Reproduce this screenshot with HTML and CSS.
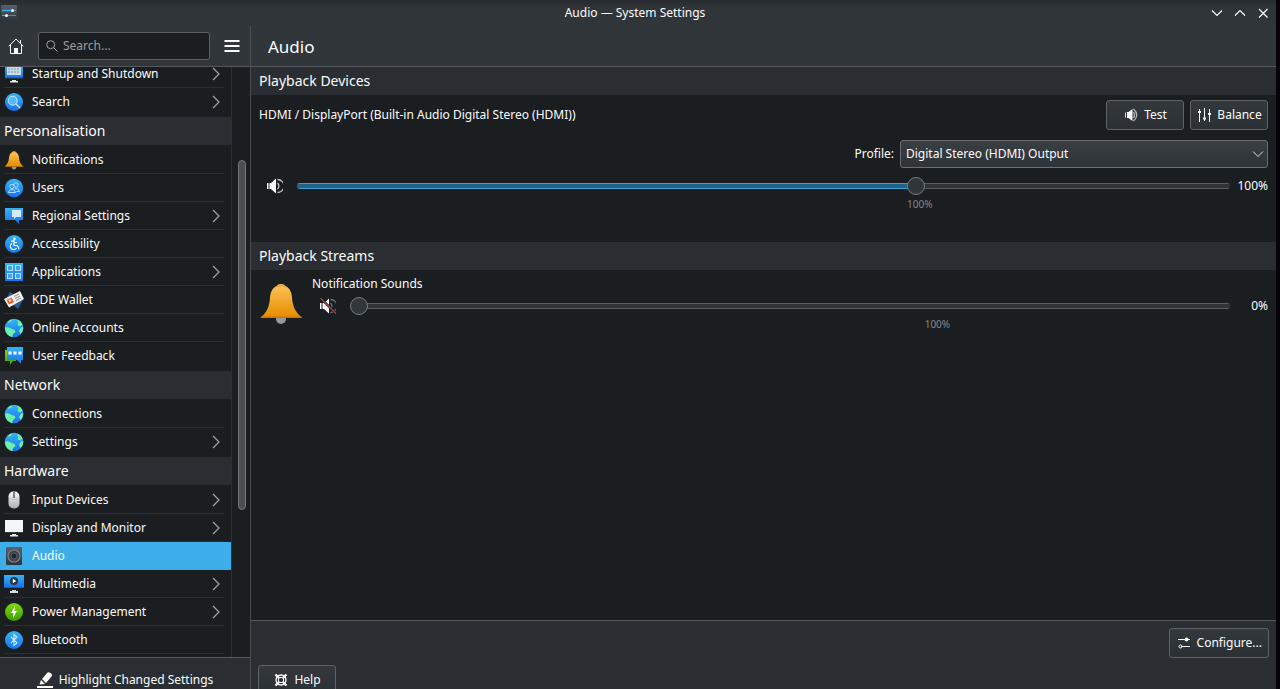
FILE: index.html
```html
<!DOCTYPE html>
<html lang="en-GB">
<head>
    <meta charset="UTF-8">
    <meta name="viewport" content="width=device-width, initial-scale=1.0">
    <title>Audio — System Settings</title>
    <link rel="stylesheet" href="styles.css">
</head>
<body>
    <!-- shared icons -->
    <svg class="defs" width="0" height="0" aria-hidden="true">
        <defs>
            <linearGradient id="blue" x1="0" y1="0" x2="0" y2="1"><stop offset="0" stop-color="#35b4f5"/><stop offset="1" stop-color="#1a73ec"/></linearGradient>
            <linearGradient id="green" x1="0" y1="0" x2="0" y2="1"><stop offset="0" stop-color="#7bdc08"/><stop offset="1" stop-color="#3f9c0a"/></linearGradient>
            <linearGradient id="gold" x1="0" y1="0" x2="0" y2="1"><stop offset="0" stop-color="#fdc55b"/><stop offset="1" stop-color="#e58c00"/></linearGradient>
            <linearGradient id="silver" x1="0" y1="0" x2="0" y2="1"><stop offset="0" stop-color="#fafafa"/><stop offset="1" stop-color="#a9adb2"/></linearGradient>
            <linearGradient id="slate" x1="0" y1="0" x2="0" y2="1"><stop offset="0" stop-color="#56616b"/><stop offset="1" stop-color="#2c343c"/></linearGradient>
        </defs>
        <symbol id="chevron" viewBox="0 0 8 14"><path d="M1 1l6 6-6 6" fill="none" stroke="#a3a6a8" stroke-width="1.2"/></symbol>
        <symbol id="bell" viewBox="0 0 44 44">
            <path d="M17 37h10v1a5 5 0 0 1-10 0z" fill="#95999d"/>
            <path d="M17.500 5a4.800 3.200 0 0 1 9 0q6 3 6.500 11c.5 10 3.500 14.500 9.500 20.500H2c6-6 8.500-10.500 9-20.500q.5-8 6.500-11z" fill="url(#gold)"/>
            <path d="M2 35.500h40.500l.5 1.500H1.500z" fill="#c97a00"/>
            <path d="M16.500 6q5.500-3 11 0" fill="none" stroke="#e59a20"/>
        </symbol>
        <symbol id="globe" viewBox="0 0 20 20">
            <circle cx="10" cy="10" r="9.300" fill="url(#blue)"/>
            <path d="M1 9.500c2.500-.8 5 0 6.500 1.500l3 .8 1 2.200-2.500 2-.6 3C4.500 18.500 1 15 1 9.500zM13 1.500c2.500.8 4.500 2.500 5.500 5l-2.500 2-2.500-1.500.7-2zM17 9.500l2.200-.5c.2 3-.8 5.200-2.700 7l-1.500-3zM5 2.500l3-1-.5 2L4 5z" fill="#6ff0a8"/>
        </symbol>
        <symbol id="speaker" viewBox="0 0 16 16">
            <path d="M0 5h1.500v6H0zM2.500 5H4l5-4.500v15L4 11H2.500z" fill="#fcfcfc"/>
            <path d="M10.500 5a4 4 0 0 1 0 6M10.500 1.500a6.500 6.500 0 0 1 0 13" fill="none" stroke="#c4c6c8" stroke-width="1.300"/>
        </symbol>
    </svg>

    <div class="window">
        <header class="titlebar">
            <svg class="app-icon" viewBox="0 0 18 18">
                <rect x="1" y="1" width="16" height="16" rx="1" fill="url(#slate)"/>
                <path d="M2 6.500h9" stroke="#3daee9" stroke-width="1.500"/><path d="M11 6.500h5M7 11.500h9" stroke="#798087"/><path d="M2 11.500h4" stroke="#3daee9"/>
                <circle cx="12.500" cy="6.500" r="1.500" fill="#fff"/><circle cx="6.500" cy="11.500" r="1.500" fill="#fff"/>
            </svg>
            <span class="window-title">Audio — System Settings</span>
            <div class="window-buttons">
                <button type="button" aria-label="Minimise"><svg viewBox="0 0 12 12"><path d="M1 3.500l5 5 5-5"/></svg></button>
                <button type="button" aria-label="Maximise"><svg viewBox="0 0 12 12"><path d="M1 8.500l5-5 5 5"/></svg></button>
                <button type="button" aria-label="Close"><svg viewBox="0 0 12 12"><path d="M2 2l8.500 8.500M10.500 2L2 10.500"/></svg></button>
            </div>
        </header>

        <div class="columns">
            <aside class="sidebar">
                <div class="toolbar">
                    <button type="button" class="tool" aria-label="Home">
                        <svg viewBox="0 0 16 16"><path d="M.7 8.300L8 1l7.300 7.300M2.500 7v8.500h11V7M12.500 2v3" fill="none" stroke="#fcfcfc"/><path d="M6 15.500V10h4v5.500z" fill="#fcfcfc"/></svg>
                    </button>
                    <label class="search">
                        <svg viewBox="0 0 12 12"><circle cx="4.700" cy="4.700" r="4"/><path d="M7.600 7.600l4 4"/></svg>
                        <input type="text" placeholder="Search..." aria-label="Search">
                    </label>
                    <button type="button" class="tool" aria-label="Menu">
                        <svg viewBox="0 0 16 16"><path d="M.5 3h15M.5 8h15M.5 13h15" stroke="#fcfcfc" stroke-width="2"/></svg>
                    </button>
                </div>

                <div class="nav-area">
                    <nav class="nav">
                        <ul>
                            <li><a href="#"><svg class="icon" viewBox="0 0 20 20"><rect x="1" y="1" width="18" height="13" fill="url(#blue)"/><path d="M3 3h14v8H3z" fill="#c8dce8"/><path d="M4 5h12M4 8h12" stroke="#7d97aa" stroke-dasharray="2 1"/><path d="M1 14h18" stroke="#2a4a66"/><path d="M8 16h4v1h2v1.500H6V17h2z" fill="#e8e8e8"/></svg>Startup and Shutdown<svg class="chevron"><use href="#chevron"/></svg></a></li>
                            <li><a href="#"><svg class="icon" viewBox="0 0 20 20"><circle cx="10" cy="10" r="9" fill="url(#blue)"/><circle cx="8.700" cy="8.700" r="4.500" fill="#55b8f8" stroke="#cfeaff"/><path d="M12 12l4 4" stroke="#cfeaff" stroke-width="1.200"/></svg>Search<svg class="chevron"><use href="#chevron"/></svg></a></li>
                        </ul>
                        <h2>Personalisation</h2>
                        <ul>
                            <li><a href="#"><svg class="icon"><use href="#bell"/></svg>Notifications</a></li>
                            <li><a href="#"><svg class="icon" viewBox="0 0 20 20"><circle cx="10" cy="10" r="9.200" fill="url(#blue)"/><g fill="none" stroke="#a9dcff"><circle cx="8" cy="8.500" r="2.200"/><circle cx="12" cy="7" r="2.200"/><path d="M4.500 14.500q0-3 3.500-3t3.500 3zM11 10.500q4-.5 4.500 3h-3"/></g></svg>Users</a></li>
                            <li><a href="#"><svg class="icon" viewBox="0 0 20 20"><path d="M1 2h18v12h-4v4l-4-4H1z" fill="url(#blue)"/><path d="M8 4h9v7h-5l-2 2v-2H8z" fill="#d5ebfa"/></svg>Regional Settings<svg class="chevron"><use href="#chevron"/></svg></a></li>
                            <li><a href="#"><svg class="icon" viewBox="0 0 20 20"><circle cx="10" cy="10" r="9" fill="url(#blue)"/><circle cx="10.500" cy="4.800" r="1.300" fill="#fff"/><path d="M7 7.500l3-1v5h3.500l1.500 3.500M10 8.500h3M8 9.500a3.300 3.300 0 1 0 4.500 4.500" fill="none" stroke="#fff" stroke-width="1.200"/></svg>Accessibility</a></li>
                            <li><a href="#"><svg class="icon" viewBox="0 0 20 20"><rect x="1" y="1" width="18" height="18" fill="url(#blue)"/><g fill="#39a5ee" stroke="#b3e0ff"><rect x="3.500" y="3.500" width="5" height="5"/><rect x="11.500" y="3.500" width="5" height="5"/><rect x="3.500" y="11.500" width="5" height="5"/><rect x="11.500" y="11.500" width="5" height="5"/></g></svg>Applications<svg class="chevron"><use href="#chevron"/></svg></a></li>
                            <li><a href="#"><svg class="icon" viewBox="0 0 20 20"><path d="M2 9l4-7 13 8-5 9z" fill="#285e96"/><path d="M0 9L16 1l4 8L5 17.500z" fill="#f4f0ea"/><path d="M2.500 10l5-2.500 2.500 4.500-5 2.500z" fill="#e2632c"/><path d="M10 6.500l5-2.500M11 8.500l5-2.500M12 10.500l5-2.500" stroke="#8a8a8a"/><circle cx="6" cy="10.500" r="1.200" fill="#f8ddc8"/></svg>KDE Wallet</a></li>
                            <li><a href="#"><svg class="icon"><use href="#globe"/></svg>Online Accounts</a></li>
                            <li><a href="#"><svg class="icon" viewBox="0 0 20 20"><path d="M1 4h11v11H9l-3 4v-4H1z" fill="url(#green)"/><path d="M3 1h16v13h-2v4l-4-4H3z" fill="url(#blue)"/><path d="M6 5v4M4.200 6l3.600 2M7.800 6L4.200 8M11 5v4M9.200 6l3.600 2M12.800 6L9.200 8M16 5v4M14.200 6l3.600 2M17.800 6l-3.600 2" stroke="#fff"/></svg>User Feedback</a></li>
                        </ul>
                        <h2>Network</h2>
                        <ul>
                            <li><a href="#"><svg class="icon"><use href="#globe"/></svg>Connections</a></li>
                            <li><a href="#"><svg class="icon"><use href="#globe"/></svg>Settings<svg class="chevron"><use href="#chevron"/></svg></a></li>
                        </ul>
                        <h2>Hardware</h2>
                        <ul>
                            <li><a href="#"><svg class="icon" viewBox="0 0 20 20"><rect x="4.500" y="1.500" width="11" height="17" rx="5" fill="url(#silver)"/><path d="M10 2v6" stroke="#5c6166" stroke-width="1.600"/><path d="M5 8.500q5 2 10 0" fill="none" stroke="#c0c3c6"/></svg>Input Devices<svg class="chevron"><use href="#chevron"/></svg></a></li>
                            <li><a href="#"><svg class="icon" viewBox="0 0 20 20"><rect x="1" y="2" width="18" height="12.500" fill="#f3f7fa"/><path d="M1 14.500h18" stroke="#34393e"/><path d="M8 16h4v1h2v1.500H6V17h2z" fill="#e8e8e8"/></svg>Display and Monitor<svg class="chevron"><use href="#chevron"/></svg></a></li>
                            <li class="current"><a href="#" aria-current="page"><svg class="icon" viewBox="0 0 20 20"><rect x="2" y="1" width="16" height="18" rx="1" fill="url(#slate)"/><circle cx="10" cy="10" r="6" fill="#3a434b" stroke="#77818b" stroke-width="1.200"/><circle cx="10" cy="10" r="3" fill="#20262b" stroke="#56606a"/></svg>Audio</a></li>
                            <li><a href="#"><svg class="icon" viewBox="0 0 20 20"><rect x="0" y="1" width="20" height="12" fill="url(#blue)"/><path d="M0 13.500h20" stroke="#2b5f80"/><path d="M8 16h4v1h2v2H6v-2h2z" fill="#d8dadc"/><circle cx="10" cy="7" r="4" fill="#29333b"/><path d="M8.800 4.800l3.500 2.200-3.500 2.200z" fill="#fff"/></svg>Multimedia<svg class="chevron"><use href="#chevron"/></svg></a></li>
                            <li><a href="#"><svg class="icon" viewBox="0 0 20 20"><circle cx="10" cy="10" r="9" fill="url(#green)"/><path d="M11 4l-4 7h2.500L9 16l4-7h-2.500z" fill="#fff"/></svg>Power Management<svg class="chevron"><use href="#chevron"/></svg></a></li>
                            <li><a href="#"><svg class="icon" viewBox="0 0 20 20"><circle cx="10" cy="10" r="9" fill="url(#blue)"/><path d="M7 7l6 6-3 2.500v-11L13 7l-6 6" fill="none" stroke="#cfe9ff" stroke-width="1.100"/></svg>Bluetooth</a></li>
                        </ul>
                    </nav>
                    <div class="scrollbar"><div class="scroll-thumb"></div></div>
                </div>

                <div class="sidebar-footer">
                    <button type="button" class="flat">
                        <svg viewBox="0 0 16 16"><path d="M0 14h16v2H0zM2.500 12.500L4 8l4 4zM5 7l5.500-6.500q1-.8 3 .5t1.500 3L9 11z" fill="#fcfcfc"/></svg>
                        Highlight Changed Settings
                    </button>
                </div>
            </aside>

            <main class="page">
                <h1>Audio</h1>
                <div class="content">
                    <section class="devices">
                        <h2>Playback Devices</h2>
                        <div class="device">
                            <div class="device-head">
                                <span class="device-name">HDMI / DisplayPort (Built-in Audio Digital Stereo (HDMI))</span>
                                <button type="button" class="btn wide"><svg viewBox="0 0 16 16"><path d="M2.500 5.500v5" stroke="#d8dadb"/><path d="M4 5h1.500L9.500 2v12l-4-3H4z" fill="#fcfcfc"/><path d="M10.500 5q2 3 0 6M10.500 2q6.500 6 0 12" fill="none" stroke="#b5b8ba" stroke-width="1.300"/></svg>Test</button>
                                <button type="button" class="btn wide"><svg viewBox="0 0 16 16"><path d="M3.500 2v13M8.500 1v13M13.500 2v13" stroke="#fcfcfc"/><path d="M2 4h3v2H2zM7 10.500h3v2H7zM12 6h3v2h-3z" fill="#fcfcfc"/></svg>Balance</button>
                            </div>
                            <div class="profile">
                                <label for="profile">Profile:</label>
                                <div class="select">
                                    <select id="profile"><option>Digital Stereo (HDMI) Output</option></select>
                                    <svg viewBox="0 0 12 12"><path d="M1 3.500l5 5 5-5"/></svg>
                                </div>
                            </div>
                            <div class="volume">
                                <button type="button" class="mute" aria-label="Mute"><svg><use href="#speaker"/></svg></button>
                                <input type="range" min="0" max="150" value="100" aria-label="Volume" style="--fill: 66.7%">
                                <output>100%</output>
                                <div class="tick"><span>100%</span></div>
                            </div>
                        </div>
                    </section>
                    <section class="streams">
                        <h2>Playback Streams</h2>
                        <div class="stream">
                            <svg class="stream-icon"><use href="#bell"/></svg>
                            <div class="stream-body">
                                <div class="stream-name">Notification Sounds</div>
                                <div class="volume">
                                    <button type="button" class="mute" aria-label="Unmute"><svg viewBox="0 0 16 16"><path d="M0 5h1.500v6H0zM2.500 5H4l5-4.500v15L4 11H2.500z" fill="#fcfcfc"/><path d="M10.500 5a4 4 0 0 1 0 6M10.500 1.500a6.500 6.500 0 0 1 0 13" fill="none" stroke="#6a6d6f" stroke-width="1.300"/><path d="M.5 0L16 15.500" stroke="#1b1e20" stroke-width="2.400"/><path d="M.5 0L16 15.500" stroke="#b34450" stroke-width="1.200"/></svg></button>
                                    <input type="range" min="0" max="150" value="0" aria-label="Notification volume" style="--fill: 0%">
                                    <output>0%</output>
                                    <div class="tick"><span>100%</span></div>
                                </div>
                            </div>
                        </div>
                    </section>
                </div>
                <footer class="page-footer">
                    <div class="configure">
                        <button type="button" class="btn"><svg viewBox="0 0 16 16"><path d="M2 4.500h12M5 11.500h9" stroke="#fcfcfc" stroke-width="1.200"/><circle cx="10.500" cy="4.500" r="2" fill="#fcfcfc"/><circle cx="4.500" cy="11.500" r="1.500" fill="none" stroke="#fcfcfc"/></svg>Configure...</button>
                    </div>
                    <button type="button" class="btn wide"><svg viewBox="0 0 16 16"><circle cx="8" cy="8" r="5" fill="none" stroke="#fcfcfc" stroke-width="1.300"/><circle cx="8" cy="8" r="2.700" fill="none" stroke="#fcfcfc"/><path d="M2.500 2.500l3.500 3.500M13.500 2.500L10 6M2.500 13.500L6 10M13.500 13.500L10 10" stroke="#fcfcfc" stroke-width="2.400"/></svg>Help</button>
                </footer>
            </main>
        </div>
    </div>
</body>
</html>
```

FILE: styles.css
```css
* { box-sizing: border-box; }
body {
    margin: 0; padding-right: 4px; overflow: hidden; background: #06030a;
    font-family: "Noto Sans", "Open Sans", sans-serif; font-size: 12px; line-height: 18px; color: #fcfcfc;
}
button, input, select { font: inherit; color: inherit; }
button { padding: 0; border: none; background: none; }
h1, h2 { margin: 0; font-weight: normal; }
svg { flex: none; }
.defs { position: absolute; }

/* the window reaches a little below the screen edge */
.window { display: flex; flex-direction: column; height: calc(100vh + 13px); background: #2a2e32; }
.titlebar {
    display: grid; grid-template-columns: 1fr auto 1fr; align-items: center; height: 26px; padding: 0 6px 0 0;
    background: linear-gradient(#272b2f, #30353a 8px);
}
.app-icon { width: 18px; height: 18px; }
.window-buttons { display: flex; justify-content: flex-end; gap: 9px; }
.window-buttons button { width: 14px; height: 14px; display: flex; align-items: center; justify-content: center; }
.window-buttons svg { width: 12px; height: 12px; fill: none; stroke: #fcfcfc; stroke-width: 1.2; }
.columns { flex: 1; display: flex; min-height: 0; }

/* sidebar */
.sidebar { width: 251px; display: flex; flex-direction: column; border-right: 1px solid #494d51; }
.toolbar {
    display: flex; align-items: center; gap: 14px; height: 41px; padding: 0 10px 0 8px;
    background: #31363b; border-bottom: 1px solid #54585c;
}
.tool { display: flex; }
.tool svg { width: 16px; height: 16px; }
.search {
    flex: 1; display: flex; align-items: center; gap: 5px; min-width: 0; height: 28px; padding: 0 7px;
    background: #1b1e20; border: 1px solid #5c6064; border-radius: 3px;
}
.search svg { width: 12px; height: 12px; fill: none; stroke: #a1a5a8; }
.search input { flex: 1; min-width: 0; padding: 0; border: none; outline: none; background: none; }
.search input::placeholder { color: #9a9d9f; }

.nav-area { flex: 1; display: flex; min-height: 0; overflow: hidden; background: #1b1e20; }
.nav { flex: 1; margin-top: -8px; }
.nav ul { list-style: none; margin: 0; padding: 1px 0; }
.nav li { height: 28px; padding: 0 7px 0 4px; }
.nav a {
    display: flex; align-items: center; gap: 8px; height: 28px; padding-right: 4px;
    border-bottom: 1px solid #2c3033; color: inherit; text-decoration: none;
}
.nav li:last-child a, .nav .current a { border-color: transparent; }
.nav ul:last-child li:last-child a { border-color: #2c3033; }
.nav .current { background: #3daee9; }
.nav h2 { height: 28px; padding-left: 4px; background: #2a2e32; font-size: 14px; line-height: 28px; }
.icon { width: 20px; height: 20px; }
.chevron { width: 8px; height: 14px; margin-left: auto; }
.scrollbar { width: 19px; padding: 93px 4px 0 6px; border-left: 1px solid #2c3033; }
.scroll-thumb { height: 350px; background: #4b4e50; border: 1px solid #73767a; border-radius: 4px; }

.sidebar-footer { display: flex; justify-content: center; align-items: center; height: 45px; border-top: 1px solid #54585c; }
.flat { display: flex; align-items: center; gap: 6px; }
.flat svg { width: 16px; height: 16px; }

/* page */
.page { flex: 1; display: flex; flex-direction: column; min-width: 0; }
.page h1 { height: 41px; padding-left: 17px; background: #31363b; border-bottom: 1px solid #54585c; font-size: 17px; line-height: 41px; }
.content { flex: 1; background: #1b1e20; }
.content h2 { height: 28px; padding-left: 8px; background: #2a2e32; font-size: 14px; line-height: 28px; }
.device { padding: 5px 8px 33px; }
.device-head { display: flex; align-items: center; gap: 6px; }
.device-name { flex: 1; }
.btn {
    display: flex; align-items: center; justify-content: center; gap: 5px; height: 30px; padding: 0 6px;
    background: linear-gradient(#33383c, #2b3034); border: 1px solid #5f6366; border-radius: 3px;
}
.btn.wide { width: 78px; }
.btn svg { width: 16px; height: 16px; }
.profile { display: flex; justify-content: flex-end; align-items: center; gap: 6px; margin-top: 10px; }
.select { position: relative; width: 368px; }
.select select {
    appearance: none; display: block; width: 100%; height: 28px; padding: 0 24px 0 5px;
    background: linear-gradient(#3a3f44, #2e3337); border: 1px solid #6b6f72; border-radius: 3px;
}
.select svg { position: absolute; right: 4px; top: 8px; width: 12px; height: 12px; fill: none; stroke: #e0e2e3; pointer-events: none; }

.volume { display: grid; grid-template-columns: 32px 1fr 32px; column-gap: 6px; align-items: center; }
.device .volume { margin-top: 6px; }
.mute { display: flex; align-items: center; justify-content: center; height: 24px; }
.mute svg { width: 16px; height: 16px; }
.volume output { text-align: right; }
.volume input { appearance: none; width: 100%; height: 18px; margin: 0; background: none; }
.volume input::-webkit-slider-runnable-track {
    height: 6px; border-radius: 3px;
    background:
        linear-gradient(#3b9fd0 1px, #1f638a 1px 5px, #3b9fd0 5px) no-repeat 0 0 / var(--fill) 100%,
        linear-gradient(#5a5e61 1px, #303437 1px 5px, #5a5e61 5px);
}
.volume input::-webkit-slider-thumb {
    appearance: none; width: 18px; height: 18px; margin-top: -6px;
    background: #31363a; border: 1px solid #777b7e; border-radius: 50%;
}
/* the mark sits at 100 of 150 */
.tick {
    grid-column: 2; display: grid; grid-template-columns: 2fr 1fr; padding-top: 1px;
    font-size: 10px; line-height: 10px; color: #85888a;
}
.tick span { grid-column: 2; margin-left: -12px; }

.stream { display: flex; gap: 9px; padding: 5px 8px; }
.stream-icon { width: 44px; height: 44px; margin-top: 6px; }
.stream-body { flex: 1; }
.stream-name { margin-bottom: 1px; }

.page-footer { height: 82px; padding: 7px; border-top: 1px solid #54585c; }
.configure { display: flex; justify-content: flex-end; margin-bottom: 7px; }
```
